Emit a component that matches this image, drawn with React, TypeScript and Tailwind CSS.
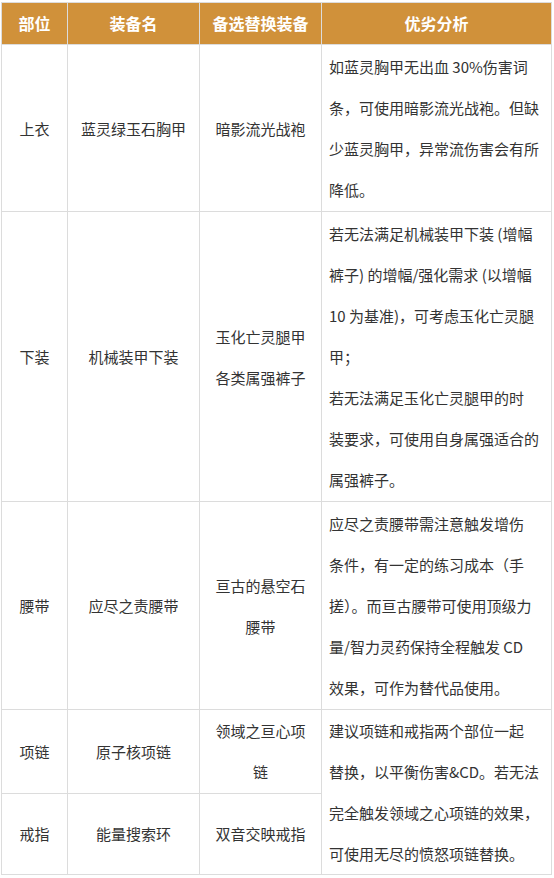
import React from "react";

const font = { fontFamily: '"Noto Sans CJK SC", "Noto Sans", sans-serif' };

function Lines({ lines }: { lines: string[] }) {
  return (
    <>
      {lines.map((l, i) => (
        <div key={i} className="whitespace-nowrap">
          {l}
        </div>
      ))}
    </>
  );
}

const td = "border border-[#dcdcdc] text-center align-middle";
const tdL = "border border-[#dcdcdc] text-left align-middle pl-[7px] pr-[4px]";

export default function App() {
  return (
    <div className="w-[554px] h-[878px] bg-white pt-[2px] pl-px" style={font}>
      <table className="border-collapse table-fixed w-[550px] text-[15px] leading-[41px] text-[#333333]">
        <colgroup>
          <col className="w-[66px]" />
          <col className="w-[132px]" />
          <col className="w-[122px]" />
          <col className="w-[230px]" />
        </colgroup>
        <thead>
          <tr className="h-[42px] bg-[#d0913a] text-white font-bold text-[16px]">
            <th className={td}>部位</th>
            <th className={td}>装备名</th>
            <th className={td}>备选替换装备</th>
            <th className={td}>优劣分析</th>
          </tr>
        </thead>
        <tbody>
          <tr className="h-[167px]">
            <td className={td}>上衣</td>
            <td className={td}>蓝灵绿玉石胸甲</td>
            <td className={td}>暗影流光战袍</td>
            <td className={tdL}>
              <Lines
                lines={[
                  "如蓝灵胸甲无出血 30%伤害词",
                  "条，可使用暗影流光战袍。但缺",
                  "少蓝灵胸甲，异常流伤害会有所",
                  "降低。",
                ]}
              />
            </td>
          </tr>
          <tr className="h-[290px]">
            <td className={td}>下装</td>
            <td className={td}>机械装甲下装</td>
            <td className={td}>
              <div>玉化亡灵腿甲</div>
              <div>各类属强裤子</div>
            </td>
            <td className={tdL}>
              <Lines
                lines={[
                  "若无法满足机械装甲下装 (增幅",
                  "裤子) 的增幅/强化需求 (以增幅",
                  "10 为基准)，可考虑玉化亡灵腿",
                  "甲；",
                  "若无法满足玉化亡灵腿甲的时",
                  "装要求，可使用自身属强适合的",
                  "属强裤子。",
                ]}
              />
            </td>
          </tr>
          <tr className="h-[208px]">
            <td className={td}>腰带</td>
            <td className={td}>应尽之责腰带</td>
            <td className={td}>
              <div>亘古的悬空石</div>
              <div>腰带</div>
            </td>
            <td className={tdL}>
              <Lines
                lines={[
                  "应尽之责腰带需注意触发增伤",
                  "条件，有一定的练习成本（手",
                  "搓）。而亘古腰带可使用顶级力",
                  "量/智力灵药保持全程触发 CD",
                  "效果，可作为替代品使用。",
                ]}
              />
            </td>
          </tr>
          <tr className="h-[83px]">
            <td className={td}>项链</td>
            <td className={td}>原子核项链</td>
            <td className={td}>
              <div>领域之亘心项</div>
              <div>链</div>
            </td>
            <td className={tdL} rowSpan={2}>
              <Lines
                lines={[
                  "建议项链和戒指两个部位一起",
                  "替换，以平衡伤害&CD。若无法",
                  "完全触发领域之心项链的效果，",
                  "可使用无尽的愤怒项链替换。",
                ]}
              />
            </td>
          </tr>
          <tr className="h-[81px]">
            <td className={td}>戒指</td>
            <td className={td}>能量搜索环</td>
            <td className={td}>双音交映戒指</td>
          </tr>
        </tbody>
      </table>
    </div>
  );
}
